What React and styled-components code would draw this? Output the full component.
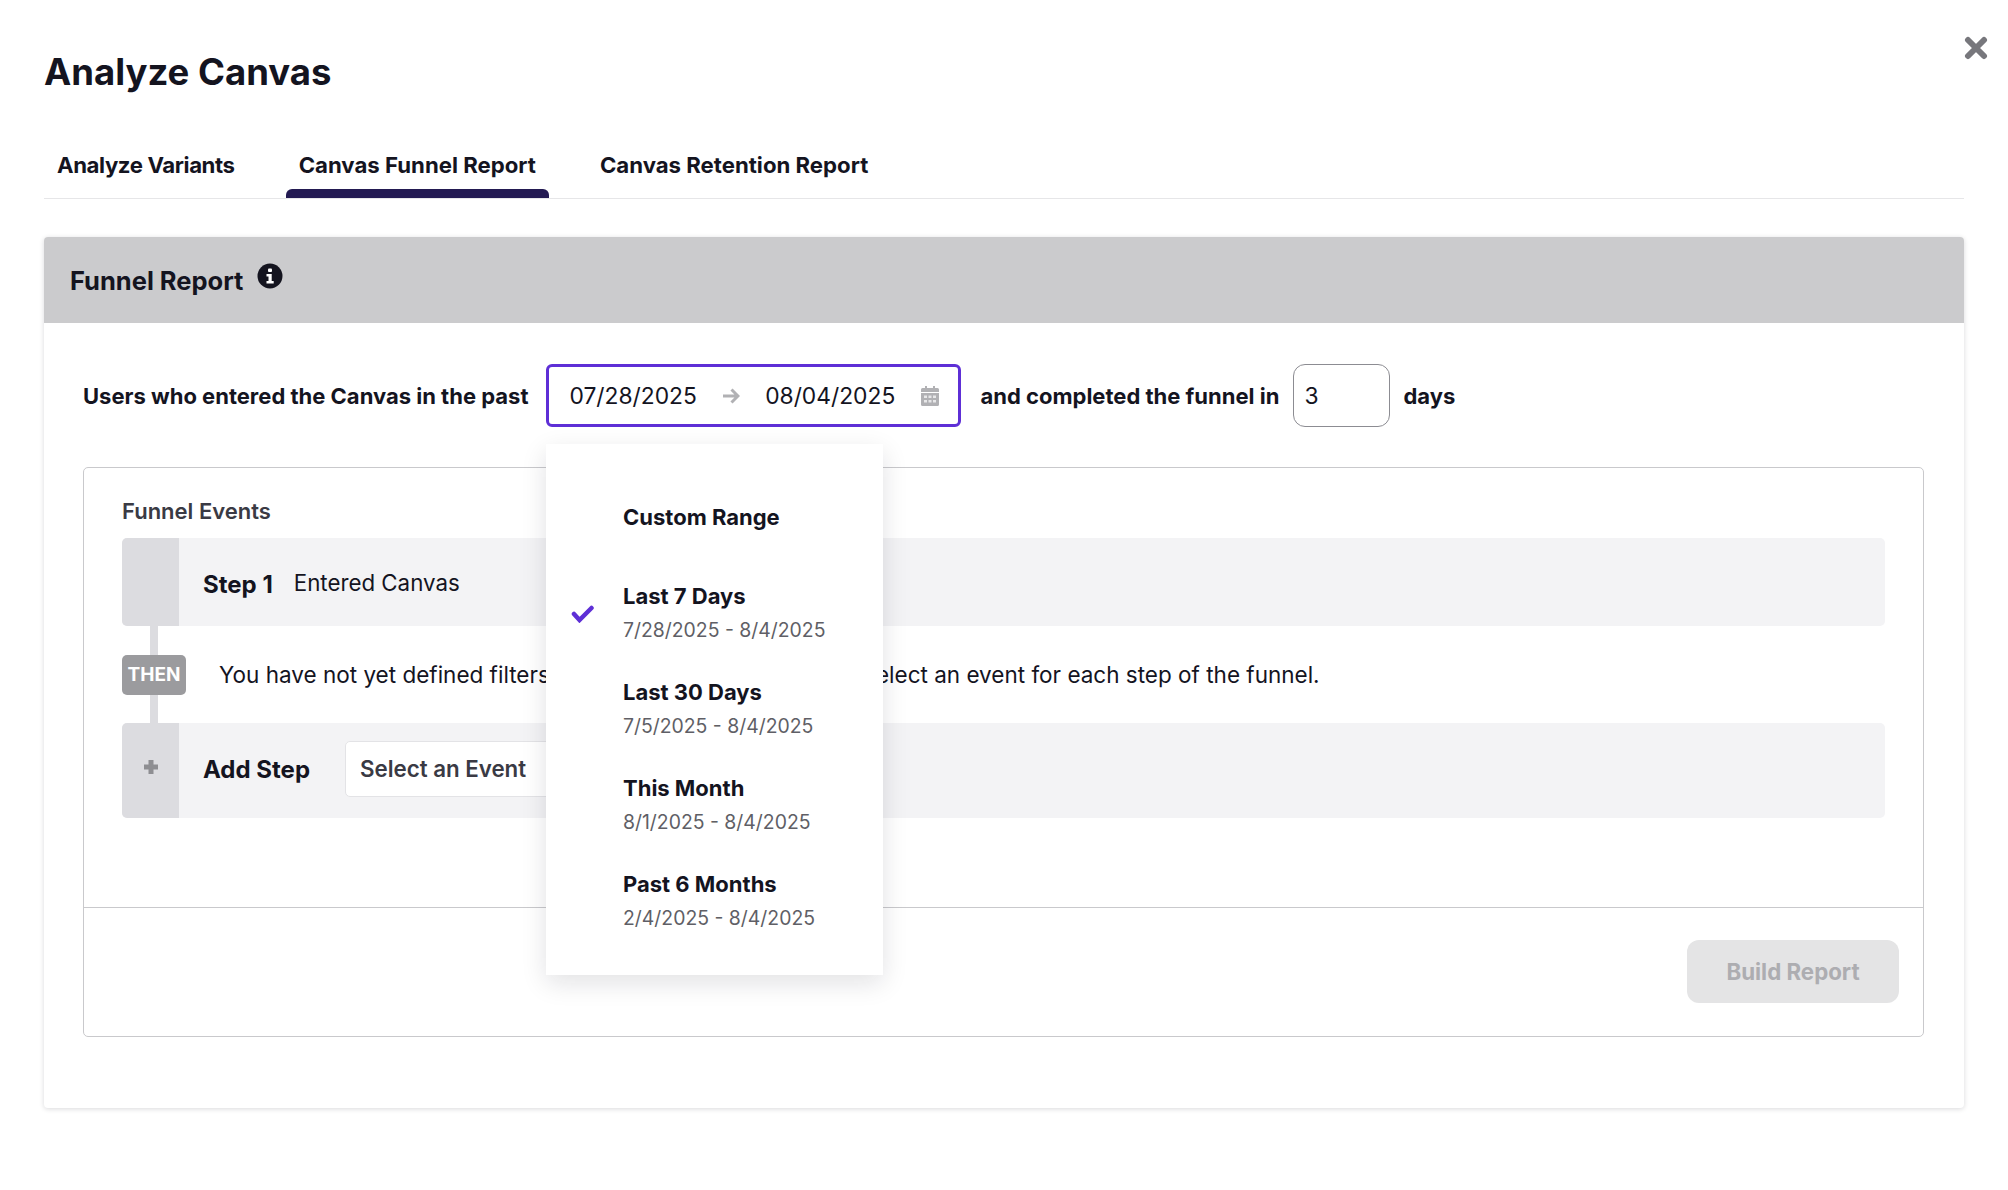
import React from "react";
import styled, { createGlobalStyle } from "styled-components";

const Global = createGlobalStyle`
  html, body { margin: 0; padding: 0; background: #fff; }
  body { font-family: "Inter", "Noto Sans", sans-serif; color: #14141f; width: 2008px; height: 1190px; overflow: hidden; }
  * { box-sizing: border-box; }
`;

const Page = styled.div`
  position: relative;
  width: 2008px;
  height: 1190px;
  padding: 44px 44px 0;
`;
const Title = styled.h1`
  margin: 0;
  height: 56px;
  font-size: 36.5px;
  line-height: 56px;
  font-weight: 700;
  color: #14141f;
`;
const CloseBtn = styled.button`
  position: absolute;
  top: 34px;
  right: 20px;
  width: 24px;
  height: 28px;
  padding: 0;
  border: 0;
  background: none;
  display: flex;
  align-items: center;
  justify-content: center;
`;
const Tabs = styled.div`
  margin-top: 42px;
  height: 57px;
  display: flex;
  border-bottom: 1px solid #e6e6e8;
`;
const Tab = styled.div`
  position: relative;
  padding: 0 13px;
  margin-right: 38px;
  height: 56px;
  font-size: 22.2px;
  font-weight: 700;
  line-height: 46px;
  white-space: nowrap;
  letter-spacing: ${(p) => p.$track || 0}px;
  ${(p) => p.$active && `
    &::after {
      content: "";
      position: absolute;
      left: 0; right: 0; bottom: 0;
      height: 9px;
      background: #231a52;
      border-radius: 6px 6px 0 0;
    }
  `}
`;
const Card = styled.section`
  margin-top: 38px;
  height: 871px;
  border-radius: 4px;
  background: #fff;
  box-shadow: 0 1px 5px rgba(20, 20, 30, 0.16);
  display: flex;
  flex-direction: column;
`;
const CardHead = styled.header`
  height: 86px;
  background: #cbcbcd;
  border-radius: 4px 4px 0 0;
  padding: 0 26px;
  display: flex;
  align-items: center;
  gap: 14px;
  font-size: 25.5px;
  font-weight: 700;
`;
const InfoWrap = styled.span`
  display: flex;
  margin-top: -8px;
`;
const CardBody = styled.div`
  padding: 41px 40px 0 39px;
  display: flex;
  flex-direction: column;
  gap: 40px;
`;
const Filter = styled.div`
  position: relative;
  display: flex;
  align-items: center;
  height: 63px;
  font-size: 22px;
  font-weight: 700;
  white-space: nowrap;
`;
const DateBox = styled.div`
  width: 415px;
  height: 63px;
  margin: 0 19px 0 18px;
  border: 3px solid #5e2fd6;
  border-radius: 6px;
  padding: 0 18px 0 20px;
  display: flex;
  align-items: center;
  font-size: 22.8px;
  font-weight: 400;
  justify-content: space-between;
  color: #14141f;
`;
const NumBox = styled.div`
  width: 97px;
  height: 63px;
  margin: 0 13px 0 14px;
  border: 1px solid #8c8c92;
  border-radius: 12px;
  padding: 0 10px;
  display: flex;
  align-items: center;
  font-size: 22.8px;
  font-weight: 400;
`;
const Panel = styled.div`
  height: 570px;
  border: 1px solid #c9c9cc;
  border-radius: 5px;
  display: flex;
  flex-direction: column;
`;
const Events = styled.div`
  height: 439px;
  padding: 30px 38px 0;
`;
const EventsLabel = styled.div`
  font-size: 22px;
  font-weight: 600;
  color: #3a3a44;
  height: 40px;
  line-height: 26px;
`;
const StepRow = styled.div`
  display: flex;
  align-items: center;
  height: ${(p) => p.$h}px;
  background: #f3f3f5;
  border-radius: 5px;
  overflow: hidden;
`;
const StepTab = styled.div`
  width: 57px;
  align-self: stretch;
  background: #dcdce0;
  display: flex;
  align-items: center;
  justify-content: center;
  padding-bottom: 8px;
`;
const StepName = styled.div`
  margin-left: 24px;
  margin-top: ${(p) => p.$top || 0}px;
  font-size: 24px;
  font-weight: 700;
`;
const StepDesc = styled.div`
  margin-left: 21px;
  margin-top: 1px;
  font-size: 22.3px;
`;
const Then = styled.div`
  position: relative;
  height: 97px;
  display: flex;
  align-items: center;
  &::before {
    content: "";
    position: absolute;
    left: 28px;
    top: 0;
    bottom: 0;
    width: 8px;
    background: #dcdce0;
  }
`;
const ThenBadge = styled.span`
  position: relative;
  width: 64px;
  height: 40px;
  background: #9b9b9e;
  border-radius: 5px;
  color: #fff;
  font-size: 19px;
  font-weight: 700;
  display: flex;
  align-items: center;
  justify-content: center;
`;
const ThenText = styled.span`
  margin-left: 33px;
  font-size: 22.5px;
  white-space: nowrap;
`;
const EventSelect = styled.div`
  margin-left: 35px;
  width: 320px;
  height: 56px;
  margin-bottom: 4px;
  background: #fff;
  border: 1.5px solid #e3e3e6;
  border-radius: 5px;
  padding: 0 14px;
  font-size: 22.3px;
  font-weight: 600;
  color: #3a3a44;
  display: flex;
  align-items: center;
`;
const PanelFoot = styled.div`
  flex: 1;
  border-top: 1px solid #c9c9cc;
  display: flex;
  justify-content: flex-end;
  align-items: flex-start;
  padding: 32px 24px 0 0;
`;
const BuildBtn = styled.button`
  width: 212px;
  height: 63px;
  border: 0;
  border-radius: 12px;
  background: #e4e4e5;
  color: #adadb1;
  font-family: inherit;
  font-size: 22.3px;
  font-weight: 700;
`;
const Menu = styled.div`
  position: absolute;
  left: 546px;
  top: 444px;
  width: 337px;
  height: 531px;
  background: #fff;
  box-shadow: 0 8px 24px rgba(20, 20, 30, 0.12);
  padding-top: 58px;
`;
const MenuItem = styled.div`
  position: relative;
  height: 96px;
  padding-left: 77px;
  &:first-child { height: 79px; }
`;
const ItemTitle = styled.div`
  font-size: 22px;
  font-weight: 700;
  line-height: 30px;
  white-space: nowrap;
`;
const ItemSub = styled.div`
  font-size: 19.4px;
  line-height: 26px;
  margin-top: 6px;
  color: #5f5f66;
`;
const Check = styled.span`
  position: absolute;
  left: 25px;
  top: 24px;
  display: flex;
`;

const ranges = [
  ["Last 7 Days", "7/28/2025 - 8/4/2025", true],
  ["Last 30 Days", "7/5/2025 - 8/4/2025"],
  ["This Month", "8/1/2025 - 8/4/2025"],
  ["Past 6 Months", "2/4/2025 - 8/4/2025"],
];

export default function App() {
  return (
    <Page>
      <Global />
      <Title>Analyze Canvas</Title>
      <CloseBtn aria-label="Close">
        <svg width="24" height="24" viewBox="0 0 24 24"><path d="M4 4 L20 20 M20 4 L4 20" fill="none" stroke="#77777c" strokeWidth="6" strokeLinecap="round"/></svg>
      </CloseBtn>
      <Tabs>
        <Tab $track={-0.4}>Analyze Variants</Tab>
        <Tab $active>Canvas Funnel Report</Tab>
        <Tab>Canvas Retention Report</Tab>
      </Tabs>
      <Card>
        <CardHead>
          Funnel Report
          <InfoWrap>
            <svg width="26" height="26" viewBox="0 0 26 26"><circle cx="13" cy="13" r="12.500" fill="#14141f"/><rect x="11" y="5.500" width="4" height="3.600" rx="1" fill="#fff"/><path d="M9.500 11h5.200v7h2v2.400H9.500V18h2v-4.600h-2z" fill="#fff"/></svg>
          </InfoWrap>
        </CardHead>
        <CardBody>
          <Filter>
            Users who entered the Canvas in the past
            <DateBox>
              <span>07/28/2025</span>
              <svg width="18" height="18" viewBox="0 0 18 18" fill="none" stroke="#b1b1b4" strokeWidth="3"><path d="M1 9h15M9.500 2.500 16 9l-6.500 6.500"/></svg>
              <span>08/04/2025</span>
              <svg width="20" height="22" viewBox="0 0 20 22"><path d="M1 8h18v11.500a1.500 1.500 0 0 1-1.500 1.500h-15A1.500 1.500 0 0 1 1 19.500zM2.500 3H5V1h2v2h6V1h2v2h2.500A1.500 1.500 0 0 1 19 4.500V7H1V4.500A1.500 1.500 0 0 1 2.500 3z" fill="#b1b1b4"/><path d="M4 10.500h3v2.500H4zM8.500 10.500h3v2.500h-3zM13 10.500h3v2.500h-3zM4 15h3v2.500H4zM8.500 15h3v2.500h-3zM13 15h3v2.500h-3z" fill="#e8e8e9"/></svg>
            </DateBox>
            and completed the funnel in
            <NumBox>3</NumBox>
            days
          </Filter>
          <Panel>
            <Events>
              <EventsLabel>Funnel Events</EventsLabel>
              <StepRow $h={88}>
                <StepTab />
                <StepName $top={5}>Step 1</StepName>
                <StepDesc>Entered Canvas</StepDesc>
              </StepRow>
              <Then>
                <ThenBadge>THEN</ThenBadge>
                <ThenText>You have not yet defined filters for this report funnel. Please select an event for each step of the funnel.</ThenText>
              </Then>
              <StepRow $h={95}>
                <StepTab>
                  <svg width="16" height="16" viewBox="0 0 16 16"><path d="M5.500 1h5v4.500H15v5h-4.500V15h-5v-4.500H1v-5h4.500z" fill="#8e8e92"/></svg>
                </StepTab>
                <StepName $top={-2}>Add Step</StepName>
                <EventSelect>Select an Event</EventSelect>
              </StepRow>
            </Events>
            <PanelFoot>
              <BuildBtn disabled>Build Report</BuildBtn>
            </PanelFoot>
          </Panel>
        </CardBody>
      </Card>
      <Menu>
        <MenuItem><ItemTitle>Custom Range</ItemTitle></MenuItem>
        {ranges.map(([t, s, on]) => (
          <MenuItem key={t}>
            {on && (
              <Check>
                <svg width="23" height="18" viewBox="0 0 23 18" fill="none" stroke="#5e2fd6" strokeWidth="4.500" strokeLinecap="round"><path d="M3 9l5.500 6L20.500 3"/></svg>
              </Check>
            )}
            <ItemTitle>{t}</ItemTitle>
            <ItemSub>{s}</ItemSub>
          </MenuItem>
        ))}
      </Menu>
    </Page>
  );
}
